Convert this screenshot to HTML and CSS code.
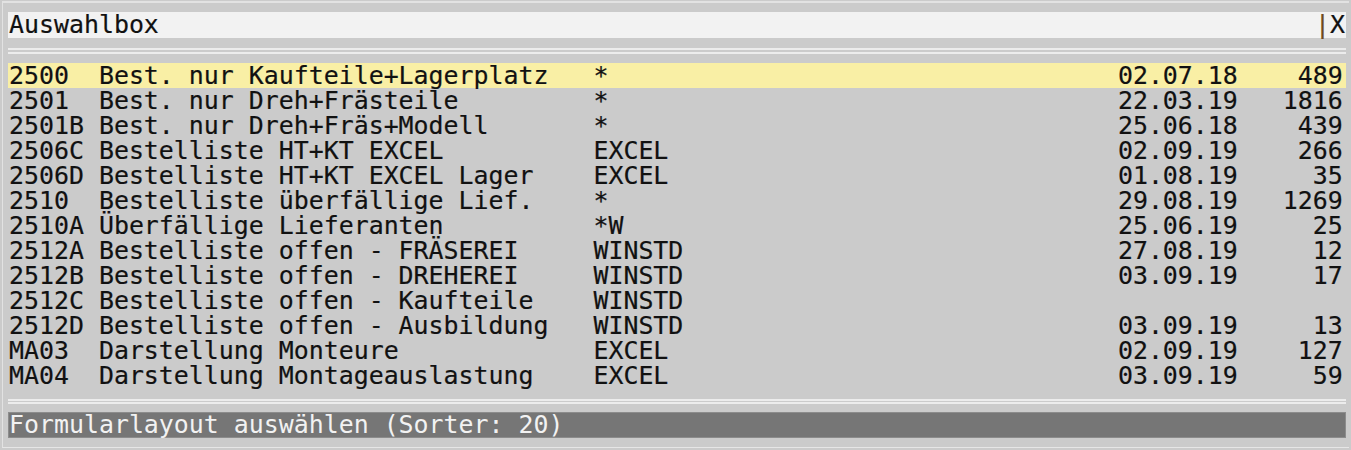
FILE: index.html
```html
<!DOCTYPE html>
<html lang="de">
<head>
<meta charset="utf-8">
<title>Auswahlbox</title>
<link rel="stylesheet" href="styles.css">
</head>
<body>
<div class="window">
  <div class="titlebar">
    <span class="title">Auswahlbox</span>
    <span class="close"><span class="bar">|</span>X</span>
  </div>
  <div class="rule"></div>
  <div class="list">
    <div class="row selected"><span>2500</span><span>Best. nur Kaufteile+Lagerplatz</span><span>*</span><span>02.07.18</span><span class="num">489</span></div>
    <div class="row"><span>2501</span><span>Best. nur Dreh+Frästeile</span><span>*</span><span>22.03.19</span><span class="num">1816</span></div>
    <div class="row"><span>2501B</span><span>Best. nur Dreh+Fräs+Modell</span><span>*</span><span>25.06.18</span><span class="num">439</span></div>
    <div class="row"><span>2506C</span><span>Bestelliste HT+KT EXCEL</span><span>EXCEL</span><span>02.09.19</span><span class="num">266</span></div>
    <div class="row"><span>2506D</span><span>Bestelliste HT+KT EXCEL Lager</span><span>EXCEL</span><span>01.08.19</span><span class="num">35</span></div>
    <div class="row"><span>2510</span><span>Bestelliste überfällige Lief.</span><span>*</span><span>29.08.19</span><span class="num">1269</span></div>
    <div class="row"><span>2510A</span><span>Überfällige Lieferanten</span><span>*W</span><span>25.06.19</span><span class="num">25</span></div>
    <div class="row"><span>2512A</span><span>Bestelliste offen - FRÄSEREI</span><span>WINSTD</span><span>27.08.19</span><span class="num">12</span></div>
    <div class="row"><span>2512B</span><span>Bestelliste offen - DREHEREI</span><span>WINSTD</span><span>03.09.19</span><span class="num">17</span></div>
    <div class="row"><span>2512C</span><span>Bestelliste offen - Kaufteile</span><span>WINSTD</span><span></span><span class="num"></span></div>
    <div class="row"><span>2512D</span><span>Bestelliste offen - Ausbildung</span><span>WINSTD</span><span>03.09.19</span><span class="num">13</span></div>
    <div class="row"><span>MA03</span><span>Darstellung Monteure</span><span>EXCEL</span><span>02.09.19</span><span class="num">127</span></div>
    <div class="row"><span>MA04</span><span>Darstellung Montageauslastung</span><span>EXCEL</span><span>03.09.19</span><span class="num">59</span></div>
  </div>
  <div class="rule rule-bottom"></div>
  <div class="status">Formularlayout auswählen (Sorter: 20)</div>
</div>
</body>
</html>
```

FILE: styles.css
```css
html, body {
  margin: 0;
  padding: 0;
}
body {
  width: 1351px;
  height: 450px;
  background: #cbcbcb;
  font-family: "DejaVu Sans Mono", "Liberation Mono", monospace;
  font-size: 24.9px;
  color: #111;
  overflow: hidden;
}
.window {
  box-sizing: border-box;
  margin: 1px 2px 0 2px;
  height: 447px;
  border-top: 2px solid #e2e2e2;
  border-left: 1px solid #e2e2e2;
  border-bottom: 1px solid #e6e6e6;
  padding: 9px 3px 0 5px;
  display: flex;
  flex-direction: column;
}
.titlebar {
  height: 26px;
  line-height: 26px;
  background: #f2f2f2;
  display: flex;
  justify-content: space-between;
  padding: 0 1px;
  -webkit-text-stroke: 0.2px #111;
}
.close .bar {
  color: #6e4a20;
  -webkit-text-stroke: 0.2px #6e4a20;
}
.rule {
  margin-top: 10px;
  height: 2px;
  border-top: 2px solid #ececec;
  border-bottom: 2px solid #ececec;
}
.list {
  margin-top: 9px;
  -webkit-text-stroke: 0.2px #111;
}
.row {
  display: grid;
  grid-template-columns: 6ch 33ch 35ch 8ch 7ch;
  height: 25px;
  line-height: 25px;
  padding-left: 1px;
  white-space: pre;
}
.row.selected {
  background: #f9efa5;
}
.num {
  text-align: right;
}
.rule-bottom {
  margin-top: 11px;
  height: 1px;
}
.status {
  margin-top: 8px;
  height: 24px;
  line-height: 24px;
  background: #767676;
  border: 1px solid #8c8c8c;
  color: #f2f2f2;
  padding-left: 0;
}
```
